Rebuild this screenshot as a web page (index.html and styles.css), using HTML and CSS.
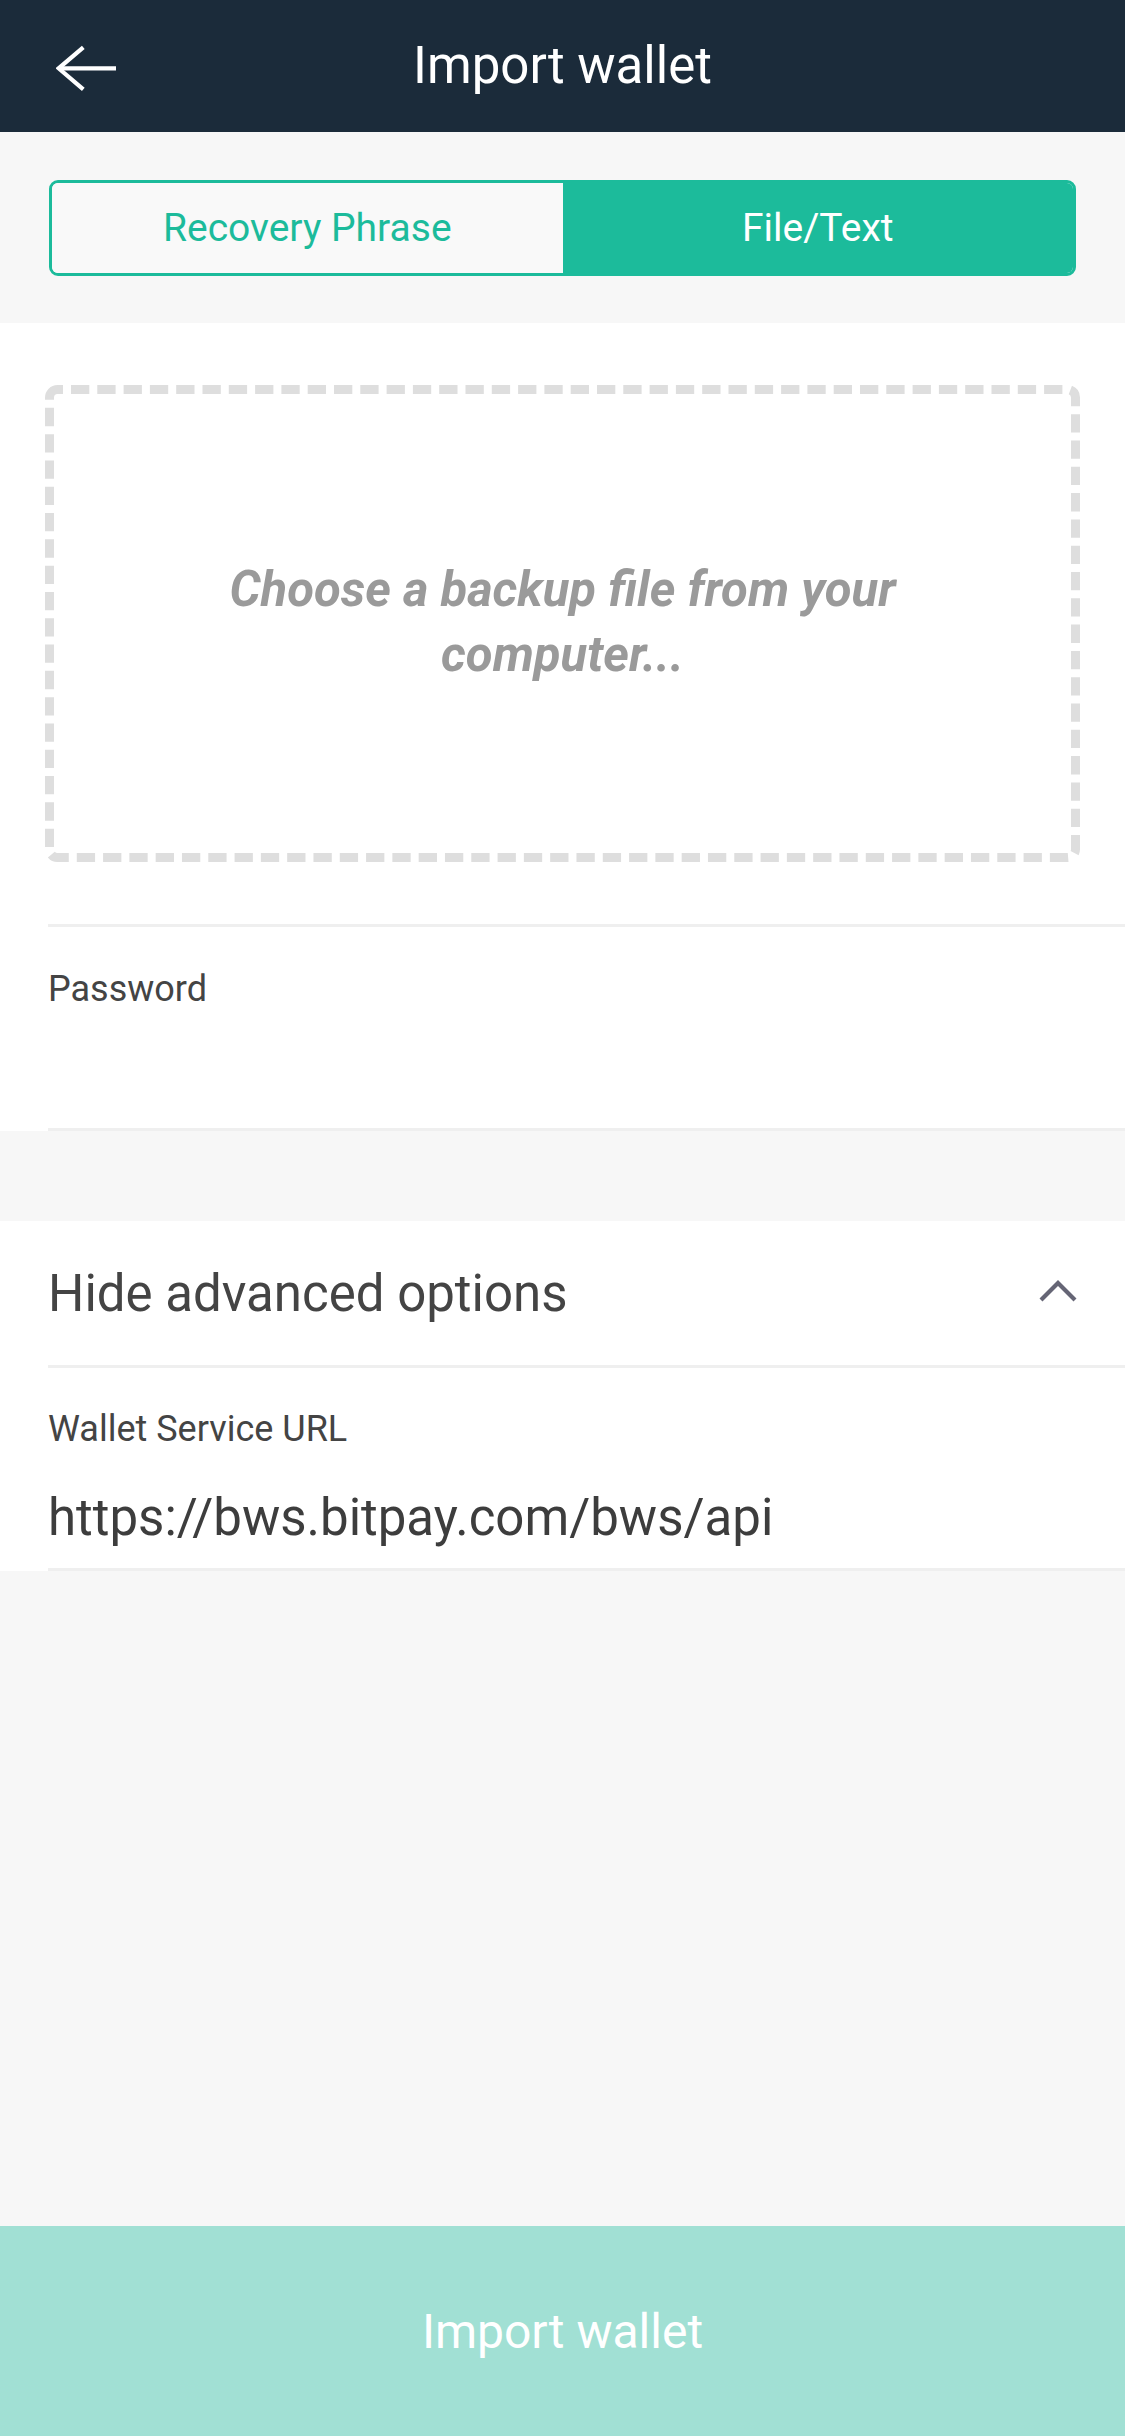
FILE: index.html
```html
<!DOCTYPE html>
<html lang="en">
<head>
<meta charset="utf-8">
<title>Import wallet</title>
<link rel="stylesheet" href="styles.css">
</head>
<body>
<div class="page">
  <header class="topbar">
    <div class="topbar-left">
      <svg class="back-icon" width="62" height="48" viewBox="0 0 62 48">
        <polyline points="27.3,3.3 2.6,24.3 27.3,45.3" fill="none" stroke="#ffffff" stroke-width="4.2" stroke-linejoin="miter"/>
        <line x1="3" y1="24.3" x2="60" y2="24.3" stroke="#ffffff" stroke-width="4.2"/>
      </svg>
    </div>
    <h1 class="title">Import wallet</h1>
    <div class="topbar-right"></div>
  </header>

  <main class="content">
    <div class="tabs-wrap">
      <div class="segment">
        <div class="seg-item">Recovery Phrase</div>
        <div class="seg-item active">File/Text</div>
      </div>
    </div>

    <section class="card file-card">
      <div class="dropzone">
        <svg class="dash" width="1035" height="477" viewBox="0 0 1035 477">
          <rect x="4.5" y="4.5" width="1026" height="468" rx="8" ry="8" fill="none" stroke="#dedede" stroke-width="9" stroke-dasharray="18.3 8" stroke-dashoffset="12.8"/>
        </svg>
        <p class="drop-text">Choose a backup file from your<br>computer...</p>
      </div>
      <div class="field password-field">
        <div class="field-label">Password</div>
      </div>
    </section>

    <section class="card advanced-card">
      <div class="toggle-row">
        <span class="toggle-text">Hide advanced options</span>
        <svg class="chevron" width="40" height="26" viewBox="0 0 40 26">
          <polyline points="3,22 20,5 37,22" fill="none" stroke="#656575" stroke-width="4.2"/>
        </svg>
      </div>
      <div class="field url-field">
        <div class="field-label">Wallet Service URL</div>
        <div class="field-value">https://bws.bitpay.com/bws/api</div>
      </div>
    </section>

    <div class="spacer"></div>
  </main>

  <footer class="import-btn">Import wallet</footer>
</div>
</body>
</html>
```

FILE: styles.css
```css
* {
  box-sizing: border-box;
}

html, body {
  margin: 0;
  padding: 0;
}

body {
  background: #f7f7f7;
  font-family: Roboto, "Noto Sans", "Liberation Sans", sans-serif;
  color: #444444;
}

.page {
  width: 1125px;
  height: 2436px;
  display: flex;
  flex-direction: column;
}

.topbar {
  height: 132px;
  flex: 0 0 132px;
  background: #1b2b3a;
  display: grid;
  grid-template-columns: 1fr auto 1fr;
  align-items: center;
}

.topbar-left {
  padding-left: 56px;
  display: flex;
  align-items: center;
  padding-top: 4px;
}

.back-icon {
  display: block;
}

.title {
  margin: 0;
  font-size: 51px;
  font-weight: 400;
  color: #ffffff;
  line-height: 60px;
}

.content {
  flex: 1;
  display: flex;
  flex-direction: column;
}

.tabs-wrap {
  padding: 48px 49px 47px 49px;
}

.segment {
  display: flex;
  height: 96px;
  border: 3px solid #1cbb9b;
  border-radius: 9px;
  overflow: hidden;
}

.seg-item {
  flex: 1;
  display: flex;
  align-items: center;
  justify-content: center;
  font-size: 39px;
  color: #1cbb9b;
  background: #f9f9f9;
}

.seg-item.active {
  background: #1cbb9b;
  color: #ffffff;
}

.card {
  background: #ffffff;
}

.file-card {
  padding-top: 62px;
}

.dropzone {
  position: relative;
  margin: 0 45px;
  height: 477px;
  display: flex;
  align-items: center;
  justify-content: center;
}

.dash {
  position: absolute;
  left: 0;
  top: 0;
}

.drop-text {
  margin: 0;
  text-align: center;
  font-size: 49px;
  line-height: 65px;
  font-weight: 700;
  font-style: italic;
  color: #9a9a9a;
  padding-bottom: 4px;
}

.field {
  margin-left: 48px;
  border-top: 3px solid #efefef;
  border-bottom: 3px solid #efefef;
}

.password-field {
  margin-top: 62px;
  height: 207px;
  padding-top: 42px;
}

.field-label {
  font-size: 36px;
  line-height: 41px;
  color: #444444;
}

.advanced-card {
  margin-top: 90px;
}

.toggle-row {
  height: 144px;
  display: flex;
  align-items: center;
  justify-content: space-between;
  padding: 0 47px 0 48px;
}

.toggle-text {
  font-size: 51px;
  color: #444444;
}

.chevron {
  display: block;
  margin-top: -4px;
}

.url-field {
  padding-top: 41px;
  padding-bottom: 21px;
}

.field-value {
  margin-top: 39px;
  font-size: 51px;
  line-height: 58px;
  color: #3d3d3d;
}

.spacer {
  flex: 1;
}

.import-btn {
  flex: 0 0 210px;
  height: 210px;
  background: #a1e0d4;
  color: #ffffff;
  font-size: 48px;
  display: flex;
  align-items: center;
  justify-content: center;
}
```
